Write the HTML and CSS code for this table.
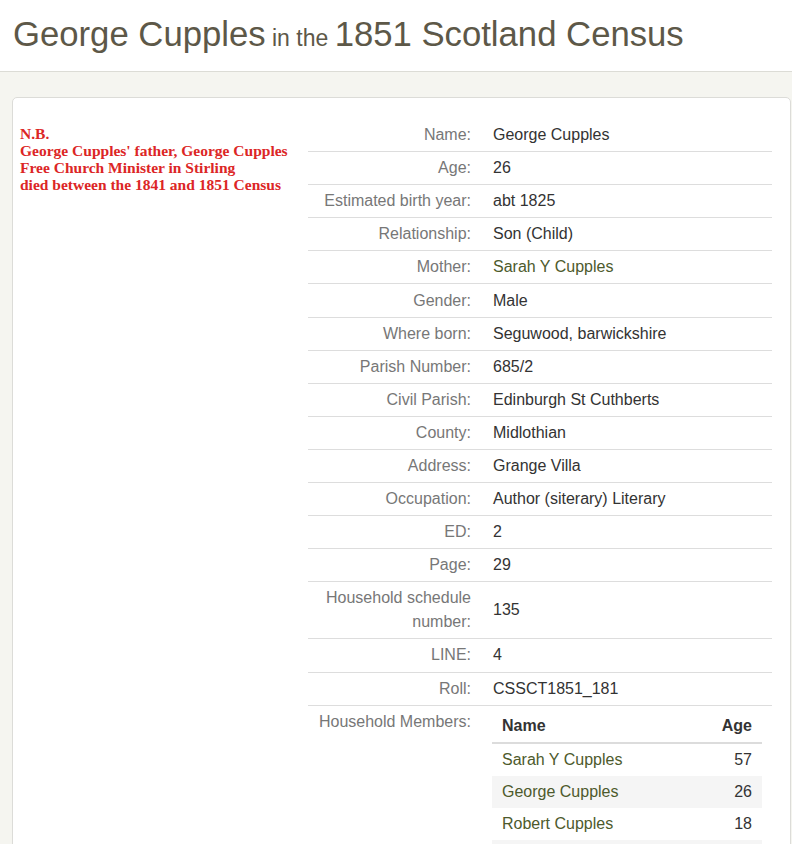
FILE: index.html
```html
<!DOCTYPE html>
<html lang="en">
<head>
<meta charset="utf-8">
<title>George Cupples in the 1851 Scotland Census</title>
<link rel="stylesheet" href="styles.css">
</head>
<body>
<header class="page-header">
  <h1 class="title">George Cupples<small class="title-small"> in the </small>1851 Scotland Census</h1>
</header>
<main class="main">
  <section class="card">
    <div class="note">
      N.B.<br>
      George Cupples' father, George Cupples<br>
      Free Church Minister in Stirling<br>
      died between the 1841 and 1851 Census
    </div>
    <table class="facts">
      <tbody>
        <tr><th>Name:</th><td>George Cupples</td></tr>
        <tr><th>Age:</th><td>26</td></tr>
        <tr><th>Estimated birth year:</th><td>abt 1825</td></tr>
        <tr><th>Relationship:</th><td>Son (Child)</td></tr>
        <tr><th>Mother:</th><td><a class="link" href="#">Sarah Y Cupples</a></td></tr>
        <tr><th>Gender:</th><td>Male</td></tr>
        <tr><th>Where born:</th><td>Seguwood, barwickshire</td></tr>
        <tr><th>Parish Number:</th><td>685/2</td></tr>
        <tr><th>Civil Parish:</th><td>Edinburgh St Cuthberts</td></tr>
        <tr><th>County:</th><td>Midlothian</td></tr>
        <tr><th>Address:</th><td>Grange Villa</td></tr>
        <tr><th>Occupation:</th><td>Author (siterary) Literary</td></tr>
        <tr><th>ED:</th><td>2</td></tr>
        <tr><th>Page:</th><td>29</td></tr>
        <tr><th>Household schedule number:</th><td>135</td></tr>
        <tr><th>LINE:</th><td>4</td></tr>
        <tr><th>Roll:</th><td>CSSCT1851_181</td></tr>
        <tr class="last">
          <th>Household Members:</th>
          <td>
            <table class="members">
              <thead>
                <tr><th class="m-name">Name</th><th class="m-age">Age</th></tr>
              </thead>
              <tbody>
                <tr><td><a class="link" href="#">Sarah Y Cupples</a></td><td class="m-age">57</td></tr>
                <tr><td><a class="link" href="#">George Cupples</a></td><td class="m-age">26</td></tr>
                <tr><td><a class="link" href="#">Robert Cupples</a></td><td class="m-age">18</td></tr>
                <tr><td>&nbsp;</td><td class="m-age">&nbsp;</td></tr>
              </tbody>
            </table>
          </td>
        </tr>
      </tbody>
    </table>
  </section>
</main>
</body>
</html>
```

FILE: styles.css
```css
html, body {
  margin: 0;
  padding: 0;
}
body {
  background: #f5f5f0;
  font-family: "Liberation Sans", Arial, sans-serif;
  color: #333;
  overflow: hidden;
}
.page-header {
  background: #fff;
  border-bottom: 1px solid #dcdcd6;
  padding: 14px 13px 17px;
}
.title {
  margin: 0;
  height: 40px;
  font-weight: normal;
  font-size: 34.7px;
  line-height: 40px;
  color: #5d5848;
  white-space: nowrap;
}
.title-small {
  font-size: 23px;
  line-height: 1;
}
.main {
  padding: 25px 1px 0 12px;
}
.card {
  background: #fff;
  border: 1px solid #dcdcd8;
  border-radius: 5px;
  padding: 21px 18px 0 7px;
  display: grid;
  grid-template-columns: 288px 464px;
  align-items: start;
  height: 800px;
}
.note {
  margin-top: 6px;
  font-family: "Liberation Serif", "Times New Roman", serif;
  font-weight: bold;
  font-size: 15.5px;
  line-height: 17px;
  color: #dc2626;
}
.facts {
  width: 464px;
  border-collapse: collapse;
  font-size: 16px;
  line-height: 24px;
}
.facts > tbody > tr > th {
  width: 158px;
  padding: 4.06px 17px 4.06px 5px;
  text-align: right;
  vertical-align: middle;
  font-weight: normal;
  color: #777;
  border-bottom: 1px solid #ddd;
}
.facts > tbody > tr > td {
  padding: 4.06px 10px 4.06px 5px;
  vertical-align: middle;
  color: #333;
  border-bottom: 1px solid #ddd;
}
.facts > tbody > tr.last > th,
.facts > tbody > tr.last > td {
  border-bottom: none;
  vertical-align: top;
}
.link {
  color: #4d5a2c;
  text-decoration: none;
}
.members {
  width: 270px;
  margin-left: -1px;
  border-collapse: collapse;
  font-size: 16px;
  line-height: 24px;
}
.members th {
  padding: 4px 10px;
  font-weight: bold;
  color: #333;
  text-align: left;
  border-bottom: 2px solid #dcdcdc;
}
.members td {
  padding: 4px 10px;
  color: #333;
}
.members tbody tr:nth-child(even) td {
  background: #f5f5f5;
}
.members .m-age {
  text-align: right;
}
```
